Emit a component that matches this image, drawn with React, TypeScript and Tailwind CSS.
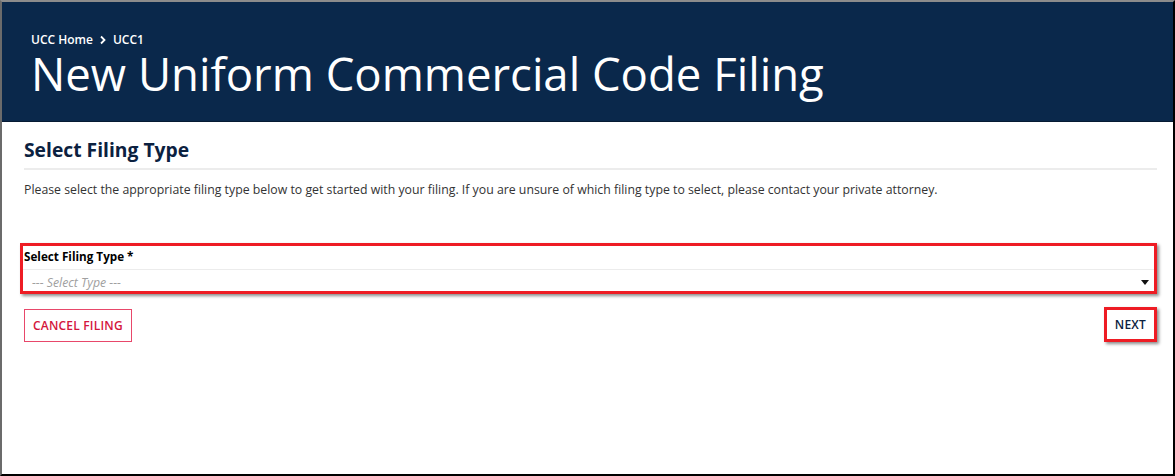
export default function App() {
  return (
    <div className="h-[476px] w-[1175px] overflow-hidden bg-white font-['Open_Sans',sans-serif] border-t-2 border-l-2 border-r-2 border-b-2 border-t-[#8c8c8c] border-l-[#6b6b6b] border-r-black border-b-black">
      {/* Header */}
      <div className="h-[120px] bg-[#0a284b] border-b border-[#061a33] pl-[29px] pt-[29px]">
        <div className="flex items-center text-[12px] font-semibold text-white leading-[17px]">
          <span>UCC Home</span>
          <svg width="8" height="10" viewBox="0 0 8 10" className="ml-[6px] mr-[6px]">
            <path d="M2 1.5 L5.5 5 L2 8.5" fill="none" stroke="white" strokeWidth="1.8" />
          </svg>
          <span>UCC1</span>
        </div>
        <h1 className="mt-[2px] text-[45.5px] leading-[46px] text-white">
          New Uniform Commercial Code Filing
        </h1>
      </div>

      {/* Content */}
      <div className="px-[22px]">
        <h2 className="pt-[15px] text-[19.3px] font-bold leading-[26px] text-[#0b2140]">Select Filing Type</h2>
        <div className="mt-[5px] mr-[-6px] h-[2px] bg-[#ececec]" />
        <p className="mt-[11px] text-[12.3px] leading-[18px] text-[#333]">
          Please select the appropriate filing type below to get started with your filing. If you are unsure of which filing type to select, please contact your private attorney.
        </p>

        {/* Select field (highlighted) */}
        <div className="mt-[44px] ml-[-4px] mr-[-6px] border-[3px] border-[#ee1c24] shadow-[2px_2px_3px_rgba(0,0,0,0.45)]">
          <div className="h-[23px] pl-[1px] pt-[1px] text-[11.7px] font-bold leading-[18px] text-black">Select Filing Type *</div>
          <div className="flex h-[22px] items-center justify-between border-t border-[#ececec] pl-[9px] pr-[5px] pt-[4px]">
            <span className="text-[12.3px] italic leading-[16px] text-[#a0a0a0]">--- Select Type ---</span>
            <svg width="8" height="5" viewBox="0 0 8 5">
              <path d="M0 0 H8 L4 5 Z" fill="#111" />
            </svg>
          </div>
        </div>

        {/* Buttons */}
        <div className="mt-[15px] flex items-start justify-between">
          <button className="h-[33px] border border-[#e8476a] px-[8px] text-[12px] font-semibold tracking-[0.2px] text-[#d4163c]">
            CANCEL FILING
          </button>
          <div className="mt-[-2px] mr-[-6px] flex h-[35px] items-center border-[3px] border-[#ee1c24] px-[8px] shadow-[2px_2px_3px_rgba(0,0,0,0.45)]">
            <span className="text-[12px] font-semibold tracking-[0.2px] text-[#0b2140]">NEXT</span>
          </div>
        </div>
      </div>
    </div>
  );
}
